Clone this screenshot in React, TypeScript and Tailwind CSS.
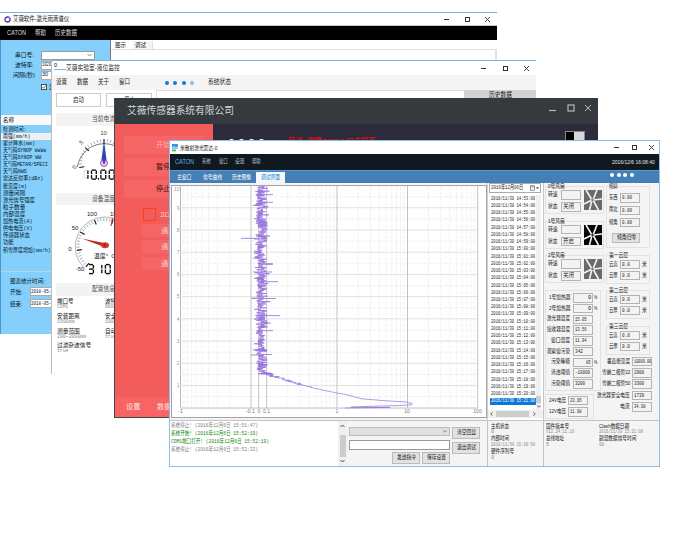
import { useLayoutEffect, useRef, useState } from "react";
import type { ReactNode } from "react";

const CJK = "font-['Liberation_Sans','Noto_Sans_CJK_SC',sans-serif]";
const MONO = "font-['Liberation_Mono','Noto_Sans_CJK_SC',monospace]";

/** One line of text, condensed or widened to fill the width of its box. */
function T({ c, children }: { c: string; children: ReactNode }) {
  const box = useRef<HTMLSpanElement>(null);
  const inner = useRef<HTMLSpanElement>(null);
  const [k, setK] = useState(1);
  useLayoutEffect(() => {
    const fit = () => {
      if (box.current && inner.current && inner.current.offsetWidth > 0) {
        setK(box.current.clientWidth / inner.current.offsetWidth);
      }
    };
    fit();
    document.fonts.ready.then(fit);
  }, []);
  return (
    <span ref={box} className={`flex shrink-0 items-center whitespace-nowrap leading-none ${c}`}>
      <span ref={inner} className="block shrink-0 origin-left" style={{ transform: `scaleX(${k})` }}>
        {children}
      </span>
    </span>
  );
}

function WinButtons({ c, gap }: { c: string; gap: string }) {
  return (
    <div className={`flex items-center ${gap} ${c}`}>
      <svg className="h-[7px] w-[7px]" viewBox="0 0 7 7"><path d="M1 3.5h5" stroke="currentColor" /></svg>
      <svg className="h-[7px] w-[7px]" viewBox="0 0 7 7"><rect x="1.5" y="1.5" width="4" height="4" fill="none" stroke="currentColor" /></svg>
      <svg className="h-[7px] w-[7px]" viewBox="0 0 7 7"><path d="M1 1l5 5M6 1l-5 5" stroke="currentColor" strokeWidth="0.9" /></svg>
    </div>
  );
}

/* ---------- Rain spectrometer window ---------- */
const rainRows: [string, string][] = [
  ["检测时间:", "w-[24px]"],
  ["雨强(mm/h)", "w-[27px]"],
  ["累计降水(mm)", "w-[32px]"],
  ["天气码SYNOP WaWa", "w-[43px]"],
  ["天气码SYNOP WW", "w-[38px]"],
  ["天气码METAR/SPECI", "w-[45px]"],
  ["天气码NWS", "w-[24px]"],
  ["雷达反射率(dBz)", "w-[40px]"],
  ["能见度(m)", "w-[24px]"],
  ["测量间隔", "w-[22px]"],
  ["激光信号强度", "w-[32px]"],
  ["粒子数量", "w-[22px]"],
  ["内部温度", "w-[22px]"],
  ["加热电流(A)", "w-[30px]"],
  ["供电电压(V)", "w-[30px]"],
  ["传感器状态", "w-[27px]"],
  ["功能", "w-[11px]"],
  ["积雪厚度增加(mm/h)", "w-[48px]"],
];

function RainWindow() {
  return (
    <div className="absolute left-0 top-[12px] flex h-[322px] w-[497px] flex-col overflow-hidden border-t border-[#78b4dc] bg-white">
      <div className="flex h-[13px] items-center border-b border-[#c8c8c8] pl-[4px] pr-[6px]">
        <svg className="mr-[2px] h-[7px] w-[7px]" viewBox="0 0 7 7">
          <circle cx="3.5" cy="3.5" r="2.5" fill="none" stroke="#4a2ba0" strokeWidth="1.3" />
          <path d="M3.5 1a2.5 2.5 0 0 1 2.5 2.5" fill="none" stroke="#9a6ae0" strokeWidth="1.3" />
        </svg>
        <T c="w-[56px] text-[6.500px] text-[#222]">艾薇软件-激光雨滴谱仪</T>
        <div className="grow" />
        <WinButtons c="text-[#333]" gap="gap-[13.5px]" />
      </div>
      <div className="flex h-[14px] items-center bg-black pl-[7px] text-[6.5px] text-[#ddd]">
        <T c="w-[19px] mr-[9px]">CATON</T>
        <T c="w-[11px] mr-[9px]">帮助</T>
        <T c="w-[22px]">历史数据</T>
      </div>
      <div className="flex grow">
        <div className="flex w-[110px] flex-col border-l border-[#4a98d0] bg-[#84cffc] text-[6px] text-[#0a1a28]">
          <div className="mt-[10px] flex h-[10px] items-center pl-[14px]">
            <T c="w-[19px]">串口号:</T>
            <div className="ml-[7px] flex h-[9px] w-[54px] items-center justify-end border border-[#999] bg-white pr-[2px]">
              <svg className="h-[4px] w-[5px]" viewBox="0 0 5 4"><path d="M.5 1l2 2 2-2" fill="none" stroke="#555" strokeWidth=".7" /></svg>
            </div>
          </div>
          <div className="flex h-[10px] items-center pl-[14px]">
            <T c="w-[19px]">波特率:</T>
            <div className="ml-[7px] flex h-[9px] w-[54px] items-center border border-[#aaa] bg-white"><T c="w-[9px] text-[5.5px]">1920</T></div>
          </div>
          <div className="flex h-[10px] items-center pl-[12px]">
            <T c="w-[22px]">间隔(秒)</T>
            <div className="ml-[6px] flex h-[9px] w-[54px] items-center border border-[#aaa] bg-white"><T c="w-[6px] text-[5.5px]">30</T></div>
          </div>
          <div className="mt-[3px] flex h-[8px] items-center pl-[40px]">
            <svg className="mr-[2px] h-[6px] w-[6px]" viewBox="0 0 6 6"><rect x=".4" y=".4" width="5.2" height="5.2" fill="#fff" stroke="#333" strokeWidth=".8" /><path d="M1.3 3l1.3 1.3L4.8 1.6" fill="none" stroke="#333" strokeWidth=".7" /></svg>
            <T c="w-[5px]">显</T>
          </div>
          <div className="mt-[24px] flex h-[10px] items-center bg-[#fafafa] pl-[2px]"><T c="w-[11px]">名称</T></div>
          <div className={`flex flex-col pt-[1px] text-[5.800px] ${MONO}`}>
            {rainRows.map(([text, w], i) => (
              <div key={text} className={`flex h-[7.12px] items-center pl-[2px] ${i === 1 ? "bg-[#f0f0f0]" : ""}`}>
                <T c={w}>{text}</T>
              </div>
            ))}
          </div>
          <div className="mt-[17px] h-px bg-[#b8d4e4]" />
          <div className="mt-[5px] flex h-[8px] items-center pl-[9px]"><T c="w-[35px]">图表统计时间:</T></div>
          <div className="mt-[2px] flex h-[10px] items-center pl-[9px]">
            <T c="w-[13px]">开始:</T>
            <div className={`ml-[7px] flex h-[9px] w-[54px] items-center border border-[#aaa] bg-white ${MONO}`}><T c="w-[20px] text-[5.5px]">2018-05-</T></div>
          </div>
          <div className="mt-[2px] flex h-[10px] items-center pl-[9px]">
            <T c="w-[13px]">结束:</T>
            <div className={`ml-[7px] flex h-[9px] w-[54px] items-center border border-[#aaa] bg-white ${MONO}`}><T c="w-[20px] text-[5.5px]">2018-05-</T></div>
          </div>
        </div>
        <div className="flex grow flex-col border-l border-[#777] bg-white">
          <div className="flex h-[9px] items-center text-[6px] text-[#222]">
            <div className="flex w-[18px] justify-center"><T c="w-[11px]">图示</T></div>
            <div className="ml-[4px] flex h-[8px] w-[20px] items-center self-end border-r border-[#ddd] bg-[#f4f4f4] pl-[2px]"><T c="w-[11px]">调试</T></div>
          </div>
          <div className="grow border-r-2 border-t border-[#e0e0e0]" />
        </div>
      </div>
    </div>
  );
}

/* ---------- Level monitor window ---------- */
function polar(cx: number, cy: number, r: number, deg: number) {
  const a = (deg * Math.PI) / 180;
  return [cx + r * Math.cos(a), cy - r * Math.sin(a)];
}

function Ticks({ cx, cy, r, from, to, n, major }: { cx: number; cy: number; r: number; from: number; to: number; n: number; major: number }) {
  return (
    <g>
      {Array.from({ length: n + 1 }, (_, i) => {
        const d = from + ((to - from) * i) / n;
        const big = i % major === 0;
        const [x1, y1] = polar(cx, cy, r, d);
        const [x2, y2] = polar(cx, cy, r - (big ? 5 : 3), d);
        return <line key={i} x1={x1} y1={y1} x2={x2} y2={y2} stroke={big ? "#111" : "#8898b0"} strokeWidth={big ? 1.1 : 0.8} />;
      })}
    </g>
  );
}

const segments: Record<string, string> = {
  "0": "abcdef",
  "1": "bc",
  "3": "abcdg",
};
const segPath: Record<string, string> = {
  a: "M1 .6h4", b: "M5.4 1v3.6", c: "M5.4 5.6v3.6", d: "M1 9.6h4", e: "M.6 5.6v3.6", f: "M.6 1v3.6", g: "M1 5.1h4",
};
function Lcd({ digits, x, y, dot }: { digits: string; x: number; y: number; dot?: number }) {
  return (
    <g>
      {digits.split("").map((d, i) => (
        <g key={i} transform={`translate(${x + i * 8.4 + (dot !== undefined && i > dot ? 1 : 0)} ${y})`} fill="none" strokeWidth="1.4">
          {(segments[d] ?? "").split("").map((s) => <path key={s} d={segPath[s]} stroke="#111" />)}
        </g>
      ))}
      {dot !== undefined && <circle cx={x + (dot + 1) * 8.4 - 0.8} cy={y + 9.4} r=".8" />}
    </g>
  );
}

function CurrentGauge() {
  return (
    <svg className="h-[67px] w-[95px] font-['Liberation_Sans',sans-serif]" viewBox="56 125 95 67">
      <path d="M77.5 166A27 27 0 0 1 131 166" fill="none" stroke="#555" strokeWidth=".8" />
      <Ticks cx={104} cy={163} r={25} from={188} to={-8} n={24} major={6} />
      <g fontSize="6" fill="#444" textAnchor="middle">
        <text x="74.5" y="168" transform="rotate(-70 74.5 166)">0</text>
        <text x="81" y="143.500" transform="rotate(-40 81 141)">5</text>
        <text x="103.500" y="133.500">10</text>
      </g>
      <path d="M104 139l-2.600 20h5.200z" fill="#2458a8" />
      <path d="M104 150l-1.600 11h3.200z" fill="#5520c8" />
      <circle cx="104" cy="162" r="3.400" fill="none" stroke="#6048b8" strokeWidth="1" />
      <circle cx="104" cy="162" r="1.500" fill="#9a40d8" />
      <path d="M84 169v8M84 169h4M84 177h4" stroke="#000" fill="none" opacity=".12" />
      <Lcd digits="1000" x={82.5} y={168.500} dot={1} />
    </svg>
  );
}

function TempGauge() {
  return (
    <svg className="h-[78px] w-[95px] font-['Liberation_Sans','Noto_Sans_CJK_SC',sans-serif]" viewBox="56 205 95 78">
      <path d="M83.500 267A29.500 29.500 0 0 1 104.500 217A29.500 29.500 0 0 1 126 226" fill="none" stroke="#999" strokeWidth=".7" />
      <Ticks cx={104.500} cy={246} r={28} from={228} to={20} n={32} major={6} />
      <path d="M112.500 218l-1.500 8" stroke="#c33" strokeWidth="1.200" />
      <g fontSize="6" fill="#222" textAnchor="middle">
        <text x="92" y="215.500">100</text>
        <text x="115" y="215.500">150</text>
        <text x="75" y="229.500">50</text>
        <text x="70" y="251">0</text>
        <text x="80" y="271">-50</text>
        <text x="101" y="258">温度°</text>
        <text x="113.500" y="258">C</text>
      </g>
      <path d="M82 238.500l22 4.500v4z" fill="#c8281e" />
      <ellipse cx="105" cy="245.300" rx="4" ry="3" fill="#d23a2a" />
      <circle cx="104.500" cy="245" r="1" fill="#7a1510" />
      <Lcd digits="310" x={88} y={264} />
    </svg>
  );
}

function SectionHead({ text }: { text: string }) {
  return (
    <div className="flex h-[12.5px] items-center bg-[#f3f3f3] pl-[36px] text-[6.5px] text-[#555]"><T c="w-[23px]">{text}</T></div>
  );
}

const config: string[][] = [
  ["端口号", "COM1", "波特率", "9600", "w-[17px]", "w-[11px]", "w-[17px]"],
  ["安装距离", "1500mm", "安全距离", "1000", "w-[23px]", "w-[18px]", "w-[23px]"],
  ["测量范围", "200~2000mm", "自动", "true", "w-[23px]", "w-[29px]", "w-[11px]"],
  ["过滤杂波信号", "true", "", "", "w-[34px]", "w-[11px]", "w-[11px]"],
];

function LevelWindow() {
  return (
    <div className="absolute left-[51px] top-[60px] flex h-[314px] w-[485px] flex-col overflow-hidden border-l border-t border-l-[#bcbcbc] border-t-[#78b4dc] bg-white">
      <div className="flex h-[14px] items-center pr-[6px]">
        <div className="h-full w-[14px] pl-[2px] text-[5.5px]">
          <span className="flex h-[9px] w-full items-center border-b border-[#78b4dc]">0</span>
        </div>
        <T c="w-[54px] text-[6.500px] text-[#222]">艾薇实验室-液位监控</T>
        <div className="grow" />
        <WinButtons c="text-[#333]" gap="gap-[14.500px]" />
      </div>
      <div className="flex h-[15px] items-center bg-[#f4f4f4] pl-[4px] text-[6.5px] text-[#222]">
        <T c="w-[11px] mr-[10px]">设置</T>
        <T c="w-[11px] mr-[10px]">数据</T>
        <T c="w-[11px] mr-[10px]">关于</T>
        <T c="w-[11px]">窗口</T>
        <div className="ml-[35px] mr-[14px] flex gap-[4.300px]">
          <i className="size-[4px] rounded-full bg-[#1478d4]" />
          <i className="size-[4px] rounded-full bg-[#1478d4]" />
          <i className="size-[4px] rounded-full bg-[#1478d4]" />
          <i className="size-[4px] rounded-full bg-[#7cc0f4]" />
        </div>
        <T c="w-[23px]">系统状态</T>
      </div>
      <div className="flex grow">
        <div className="flex w-[104px] shrink-0 flex-col overflow-hidden pl-[4px]">
          <div className="mt-[3px] flex gap-[5px] text-[6.5px] text-[#333]">
            <div className="flex h-[14px] w-[45px] items-center justify-center border border-[#ccc]"><T c="w-[11px]">启动</T></div>
            <div className="flex h-[14px] w-[46px] items-center justify-center border border-[#ccc]"><T c="w-[11px]">停止</T></div>
          </div>
          <div className="mt-[6px]"><SectionHead text="当前电流" /></div>
          <CurrentGauge />
          <SectionHead text="设备温度" />
          <TempGauge />
          <SectionHead text="配置信息" />
          <div className="mt-[2px] flex flex-col text-[6.2px] text-[#222]">
            {config.map((r) => (
              <div key={r[0]} className="flex h-[14.600px]">
                <div className="w-[49px] shrink-0 pl-px">
                  <T c={`h-[8px] ${r[4]}`}>{r[0]}</T>
                  <T c={`h-[5px] text-[5.2px] text-[#888] ${MONO} ${r[5]}`}>{r[1]}</T>
                </div>
                {r[2] && (
                  <div className="w-[49px] shrink-0">
                    <T c={`h-[8px] ${r[6]}`}>{r[2]}</T>
                    <T c={`h-[5px] w-[11px] text-[5.2px] text-[#888] ${MONO}`}>{r[3]}</T>
                  </div>
                )}
              </div>
            ))}
          </div>
        </div>
        <div className="h-[14px] grow border-l border-t border-[#ddd]" />
        <div className="flex h-[14px] w-[72px] justify-center bg-[#d2d2d2] pt-[2px] text-[6.5px] text-[#222]"><T c="h-[7px] w-[23px]">历史数据</T></div>
      </div>
    </div>
  );
}

/* ---------- Sensor system window ---------- */
function SensorWindow() {
  return (
    <div className="absolute left-[114px] top-[98px] flex h-[320px] w-[484px] flex-col overflow-hidden border-b border-l border-[#474548] bg-[#2b2b3c]">
      <div className="flex h-[26px] shrink-0 items-center bg-[#343a3d] pl-[12px] pr-[6px]">
        <T c="w-[107px] text-[10px] text-[#d4d8d8]">艾薇传感器系统有限公司</T>
        <div className="grow" />
        <div className="mb-[6px] flex items-center gap-[9.5px] text-[#b4b8b8]">
          <svg className="h-[8px] w-[8px]" viewBox="0 0 8 8"><path d="M0 6.500h7" stroke="currentColor" strokeWidth="1.200" /></svg>
          <svg className="h-[8px] w-[8px]" viewBox="0 0 8 8"><rect x="1" y="1" width="6" height="6" fill="none" stroke="currentColor" strokeWidth="1.200" /></svg>
          <svg className="h-[8px] w-[8px]" viewBox="0 0 8 8"><path d="M1 1l6 6M7 1l-6 6" stroke="currentColor" /></svg>
        </div>
      </div>
      <div className="flex grow">
        <div className="flex w-[98px] flex-col bg-[#f25c5a] text-[7.200px]">
          <div className="ml-[9px] mt-[12px] flex w-[80px] flex-col gap-[4px]">
            <div className="flex h-[18px] items-center bg-[#f66565] pl-[32px] text-[#ffb4b0]"><T c="w-[14px]">开始</T></div>
            <div className="flex h-[18px] items-center bg-[#f66565] pl-[32px] text-[#40100f]"><T c="w-[14px]">暂停</T></div>
            <div className="flex h-[18px] items-center bg-[#f66565] pl-[32px] text-[#40100f]"><T c="w-[14px]">停止</T></div>
          </div>
          <div className="ml-[28px] mt-[10px] flex items-center">
            <i className="size-[13px] border border-[#ff4020]" />
            <T c="ml-[4px] w-[10px] text-[#ffc8c4]">3D</T>
          </div>
          <div className="ml-[27px] mt-[3px] flex w-[64px] flex-col gap-[3px] text-[#ffc4c0]">
            <div className="flex h-[13px] items-center bg-[#f66565] pl-[19px]"><T c="w-[14px]">通道</T></div>
            <div className="flex h-[14px] items-center bg-[#f66565] pl-[19px]"><T c="w-[14px]">通道</T></div>
            <div className="flex h-[13px] items-center bg-[#f66565] pl-[19px]"><T c="w-[14px]">通道</T></div>
          </div>
          <div className="mt-auto flex h-[20px] items-center bg-[#f86464] pl-[11px] text-[#ffe0dc]">
            <T c="mr-[17px] w-[14px]">设置</T>
            <T c="w-[14px]">数据</T>
          </div>
        </div>
        <div className="flex grow items-start pl-[16px] pr-[13px]">
          <div className="mt-[14.500px] flex gap-[5.500px]">
            <i className="size-[4.500px] rounded-full bg-white" />
            <i className="size-[4.500px] rounded-full bg-white" />
            <i className="size-[4.500px] rounded-full bg-white" />
            <i className="size-[4.500px] rounded-full bg-white" />
          </div>
          <T c="ml-[24px] mt-[14px] w-[87px] text-[8px] font-bold text-[#d01414]">错误: 测得COM 1 口未打开</T>
          <div className="grow" />
          <div className="mt-[7px] flex h-[10px] border border-[#888]">
            <i className="w-[8px] bg-black" />
            <i className="w-[10px] bg-[#d8d8d8]" />
          </div>
        </div>
      </div>
    </div>
  );
}

/* ---------- Lidar window ---------- */
const yOf = (v: number) => 407.7 - v * 22.22;

function buildTrace() {
  let seed = 17;
  const rnd = () => {
    seed = (seed * 16807) % 2147483647;
    return seed / 2147483647;
  };
  const pts: string[] = [];
  for (let y = 186; y < 373; y += 0.27) {
    const g = rnd() + rnd() + rnd() - 1.5;
    let x = 261 + Math.sin(y / 7) * 0.8 + g * 6;
    if (rnd() > 0.97) x += (rnd() - 0.4) * 14;
    pts.push(`${x.toFixed(1)} ${y.toFixed(1)}`);
  }
  const tail = [[262, 373], [268, 375], [278, 377.5], [290, 381.5], [300, 384.5], [313, 388], [325, 390.5], [337, 393]];
  for (let i = 0; i < tail.length - 1; i++) {
    for (let s = 0; s < 10; s++) {
      const f = s / 10;
      const wobble = (rnd() - 0.4) * Math.max(1, 16 - i * 3);
      pts.push(`${(tail[i][0] + (tail[i + 1][0] - tail[i][0]) * f + wobble).toFixed(1)} ${(tail[i][1] + (tail[i + 1][1] - tail[i][1]) * f).toFixed(1)}`);
    }
  }
  return "M" + pts.join("L") + "L337 393L346 394.5L355 397L362 398.8L382 400.5L406 402L412 403.5L412 404.7L400 405.5L370 406.3L351 407.2L390 407.4L345 408";
}
const trace = buildTrace();
const spikes = [[241, 257, 238.3], [260, 273, 194.6], [260, 273, 202.3], [260, 273, 264], [260, 278, 281.7], [260, 276, 298.5], [260, 280, 315.6], [260, 271, 323], [260, 273, 330.7], [251, 260, 355], [253, 272, 272], [260, 272, 354.5]];

function ProfileChart() {
  const log = [2, 3, 4, 5, 6, 7, 8, 9].map((k) => Math.log10(k) * 70.3);
  return (
    <svg className="block h-[231px] w-[314px] font-['Liberation_Sans',sans-serif]" viewBox="172 186 314 231">
      <path d="M180.500 186V408H478" fill="none" stroke="#b8b8b8" />
      <g stroke="#e9e9e9" strokeWidth=".7" strokeDasharray="4 1.500">
        {log.map((d) => <path key={d} d={`M${251 - d} 186V408M${266.7 + d} 186V408M${337 + d} 186V408M${407.3 + d} 186V408`} />)}
        {Array.from({ length: 10 }, (_, i) => <path key={i} d={`M180 ${yOf(i + 0.5)}H478`} />)}
      </g>
      <g stroke="#e2e2e2">
        {Array.from({ length: 10 }, (_, i) => <path key={i} d={`M180 ${yOf(i)}H478`} />)}
      </g>
      <g stroke="#c2c2c2">
        {[251, 258.7, 266.7, 337, 407.5, 477.7].map((x) => <path key={x} d={`M${x} 186V408`} />)}
      </g>
      <g fontSize="5" fill="#999" textAnchor="end">
        {Array.from({ length: 10 }, (_, i) => <text key={i} x="179.500" y={i === 9 ? 190.5 : yOf(i + 1) + 1.8}>{i + 1}</text>)}
      </g>
      <g fontSize="5" fill="#777" textAnchor="middle">
        <text x="180.500" y="413">-1</text>
        <text x="250.500" y="413">-0.1</text>
        <text x="259" y="413">0</text>
        <text x="266.500" y="413">0.1</text>
        <text x="337" y="413">1</text>
        <text x="407" y="413">10</text>
        <text x="477.500" y="413">100</text>
      </g>
      <path d={trace} fill="none" stroke="#9370db" strokeWidth=".7" strokeLinejoin="round" />
      <g stroke="#9c7ce0" strokeWidth=".9">
        {spikes.map(([a, b, y]) => <path key={y} d={`M${a} ${y}H${b}`} />)}
      </g>
    </svg>
  );
}

function stamp(i: number) {
  const m = 53 + i;
  const h = m >= 60 ? 15 : 14;
  return `2016/11/30 ${h}:${String(m % 60).padStart(2, "0")}:00`;
}

function DateColumn() {
  return (
    <div className={`flex w-[56px] shrink-0 flex-col border-r border-[#c4c4c4] bg-white text-[5.800px] text-[#1a1a1a] ${MONO}`}>
      <div className="ml-px flex h-[10px] w-[52px] items-center border border-[#aaa] px-px">
        <T c="w-[32px]">2016年12月06日</T>
        <svg className="ml-auto h-[6px] w-[9px]" viewBox="0 0 9 6"><rect x=".5" y=".8" width="4" height="4.400" fill="none" stroke="#666" strokeWidth=".7" /><path d="M.5 2h4" stroke="#666" strokeWidth=".6" /><path d="M6 2.300h3l-1.500 1.800z" fill="#246" /></svg>
      </div>
      <div className="mt-[2px] flex">
        <div className="w-[48px] pl-[2px]">
          {Array.from({ length: 29 }, (_, i) => (
            <div key={i} className={`flex h-[7.240px] items-center pl-px ${i === 28 ? "bg-[#0a78d6] text-white" : ""}`}>
              <T c="w-[43.500px]">{stamp(i)}</T>
            </div>
          ))}
        </div>
        <div className="flex h-[215px] w-[5px] flex-col items-center justify-end bg-[#f0f0f0]">
          <i className="h-[7px] w-[5px] bg-[#cdcdcd]" />
          <svg className="my-[2px] h-[3px] w-[4px]" viewBox="0 0 4 3"><path d="M.3.500l1.700 1.700L3.700.500" fill="none" stroke="#333" strokeWidth=".8" /></svg>
        </div>
      </div>
      <div className="flex h-[8px] items-center justify-between bg-[#f0f0f0] px-[2px]">
        <svg className="h-[4px] w-[3px]" viewBox="0 0 3 4"><path d="M2.500.300L.8 2l1.700 1.700" fill="none" stroke="#333" strokeWidth=".8" /></svg>
        <i className="mr-[2px] h-[6px] w-[33px] bg-[#cdcdcd]" />
        <svg className="mr-[5px] h-[4px] w-[3px]" viewBox="0 0 3 4"><path d="M.5.300L2.200 2 .5 3.700" fill="none" stroke="#333" strokeWidth=".8" /></svg>
      </div>
    </div>
  );
}

function Field({ v, w = "w-[8px]", right }: { v: string; w?: string; right?: boolean }) {
  return (
    <div className={`flex h-[9.500px] w-[20px] shrink-0 items-center border border-[#b4b4b4] bg-[#f3f3f3] ${MONO} ${right ? "justify-end pr-px" : "pl-px"}`}>
      {v && <T c={`text-[5.500px] ${w}`}>{v}</T>}
    </div>
  );
}

function FanIcon({ on }: { on?: boolean }) {
  return (
    <svg className="h-[20px] w-[18px]" viewBox="0 0 18 20">
      <rect width="18" height="20" fill={on ? "#050505" : "#6a6a6a"} />
      <g stroke="#f4f4f4" strokeWidth="1.600">
        <path d="M8 10L2 0M9 10L13 0M9 10L18 9M9 10L14.500 20M8 10L0 14M8 10L5.500 20" />
      </g>
      <circle cx="8.500" cy="10" r="1.400" fill={on ? "#222" : "#777"} stroke="#ccc" strokeWidth=".4" />
    </svg>
  );
}

function FanGroup({ n, state, on }: { n: number; state: string; on?: boolean }) {
  return (
    <div className="h-[34.500px]">
      <div className="flex h-[28px] w-[59px] gap-[3px] border border-[#e2e2e2] pl-[2px]">
        <div className="flex flex-col">
          <T c="-mt-[3px] h-[6px] w-[17px]">{n}号风扇</T>
          <div className="flex h-[10px] items-center gap-[3px]"><T c="w-[10px]">转速</T><Field v="" /></div>
          <div className="mt-[2px] flex h-[10px] items-center gap-[3px]"><T c="w-[10px]">状态</T><Field v={state} w="w-[11px]" /></div>
        </div>
        <div className="pt-[3px]"><FanIcon on={on} /></div>
      </div>
    </div>
  );
}

const heater: [string, string, string, string, boolean][] = [
  ["1号加热器", "w-[21px]", "0", "w-[3px]", true],
  ["2号加热器", "w-[21px]", "0", "w-[3px]", true],
  ["激光器温度", "w-[23px]", "15.05", "w-[12px]", false],
  ["接收器温度", "w-[23px]", "13.56", "w-[12px]", false],
  ["窗口温度", "w-[19px]", "11.94", "w-[12px]", false],
  ["观察窗污染", "w-[23px]", "342", "w-[8px]", false],
  ["污染等级", "w-[19px]", "85", "w-[5px]", true],
  ["清洁阈值", "w-[19px]", "-10000", "w-[15px]", false],
  ["污染阈值", "w-[19px]", "3200", "w-[10px]", false],
];

const optics: [string, string, string, string][] = [
  ["垂直能见度", "w-[23px]", "10000.00", "w-[17px]"],
  ["雪崩二极管22", "w-[28px]", "2900", "w-[10px]"],
  ["雪崩二极管50", "w-[28px]", "3300", "w-[10px]"],
  ["激光器安全电压", "w-[33px]", "1739", "w-[10px]"],
  ["电流", "w-[10px]", "34.98", "w-[12px]"],
];

function CloudGroup({ name, gap }: { name: string; gap: string }) {
  return (
    <div className={gap}>
      <div className="h-[29px] w-[44px] border border-[#e2e2e2] pl-[2px]">
        <T c="-mt-[3px] h-[6px] w-[19px]">{name}</T>
        <div className="flex h-[11px] items-center gap-[2px]"><T c="w-[9px]">云高</T><Field v="0.0" /><T c="w-[5px]">米</T></div>
        <div className="flex h-[11px] items-center gap-[2px]"><T c="w-[9px]">云厚</T><Field v="0.0" /><T c="w-[5px]">米</T></div>
      </div>
    </div>
  );
}

function StatusPanel() {
  return (
    <div className="flex grow pl-px pt-[3px] text-[5.800px] text-[#222]">
      <div className="w-[61px] shrink-0">
        <FanGroup n={0} state="关闭" />
        <FanGroup n={1} state="开启" on />
        <FanGroup n={2} state="关闭" />
        <div className="h-[101px] w-[56px] border border-[#e2e2e2] pt-[2px]">
          {heater.map(([name, w, v, vw, pct]) => (
            <div key={name} className="flex h-[10.750px] items-center">
              <div className="flex w-[24px] justify-end"><T c={w}>{name}</T></div>
              <div className="ml-[3px] flex items-center gap-px">
                <Field v={v} w={vw} right={pct} />
                {pct && <T c="w-[3px] text-[5px]">%</T>}
              </div>
            </div>
          ))}
        </div>
        <div className="mt-[3px] h-[25px] w-[49px] border border-[#e2e2e2] pl-[3px]">
          <div className="flex h-[12px] items-center gap-[2px]"><T c="w-[17px]">24V电压</T><Field v="23.95" w="w-[12px]" /></div>
          <div className="flex h-[11px] items-center gap-[2px]"><T c="w-[17px]">12V电压</T><Field v="11.98" w="w-[12px]" /></div>
        </div>
      </div>
      <div className="w-[46px] shrink-0">
        <div className="h-[69px]">
          <div className="h-[62px] w-[44px] border border-[#e2e2e2] pl-[2px]">
            <T c="-mt-[3px] h-[6px] w-[9px]">倾斜</T>
            <div className="mt-[2px] flex h-[12.200px] items-center gap-[2px]"><T c="w-[9px]">东西</T><Field v="0.00" w="w-[10px]" /></div>
            <div className="flex h-[12.200px] items-center gap-[2px]"><T c="w-[9px]">南北</T><Field v="0.00" w="w-[10px]" /></div>
            <div className="flex h-[12.200px] items-center gap-[2px]"><T c="w-[9px]">倾角</T><Field v="0.00" w="w-[10px]" /></div>
            <div className="ml-[3px] mt-[4px] flex h-[10px] w-[28px] items-center justify-center border border-[#bbb] bg-[#e2e2e2]"><T c="w-[19px]">倾角归零</T></div>
          </div>
        </div>
        <CloudGroup name="第一云层" gap="h-[35px]" />
        <CloudGroup name="第二云层" gap="h-[36px]" />
        <CloudGroup name="第三云层" gap="h-[30px]" />
        <div className="-ml-[11px] flex w-[57px] flex-col">
          {optics.map(([name, w, v, vw]) => (
            <div key={name} className="flex h-[11.300px] items-center justify-end gap-[2px]">
              <T c={w}>{name}</T>
              <Field v={v} w={vw} />
            </div>
          ))}
        </div>
      </div>
    </div>
  );
}

function Btn({ text, c }: { text: string; c: string }) {
  return (
    <div className={`flex w-[28px] items-center justify-center border border-[#bababa] bg-[#e2e2e2] ${c}`}><T c="w-[19px]">{text}</T></div>
  );
}

function Info({ label, lw, value, vw }: { label: string; lw: string; value: string; vw: string }) {
  return (
    <div className="h-[12.800px]">
      <T c={`h-[7px] text-[5.800px] text-[#222] ${lw}`}>{label}</T>
      <T c={`h-[5px] text-[5.200px] text-[#888] ${MONO} ${vw}`}>{value}</T>
    </div>
  );
}

const logs: [string, string, string][] = [
  ["系统停止! (2016年12月6日 15:51:47)", "text-[#808080]", "w-[87px]"],
  ["系统开始! (2016年12月6日 15:52:19)", "text-[#108810]", "w-[87px]"],
  ["COM1端口打开! (2016年12月6日 15:52:19)", "text-[#108810]", "w-[98px]"],
  ["系统停止! (2016年12月6日 15:52:33)", "text-[#808080]", "w-[87px]"],
];

function LidarWindow() {
  return (
    <div className="absolute left-[169px] top-[140px] flex h-[327px] w-[491px] flex-col overflow-hidden border border-[#8cbfe8] bg-[#f4f4f4]">
      <div className="flex h-[13px] shrink-0 items-center bg-white pl-[2px] pr-[4px]">
        <svg className="mr-[2px] h-[8px] w-[6px]" viewBox="0 0 6 8"><rect width="6" height="4.500" fill="#2a9ae0" /><path d="M0 3l2-1 2 1 2-1v2H0z" fill="#8cd0f8" /><rect y="5.500" width="4" height="1.800" fill="#52b848" /></svg>
        <T c="w-[37px] text-[6px] text-[#222]">米散射激光雷达-0</T>
        <div className="grow" />
        <WinButtons c="text-[#333]" gap="gap-[10.500px]" />
      </div>
      <div className="flex h-[16px] shrink-0 items-center bg-[#101820] pl-[5px] pr-[4px] text-[5.800px] text-[#b8c0c8]">
        <T c="w-[19px] text-[6.500px] text-[#5ab0e8]">CATON</T>
        <T c="ml-[8px] w-[9px]">系统</T>
        <T c="ml-[8px] w-[9px]">窗口</T>
        <T c="ml-[7px] w-[10px]">设置</T>
        <T c="ml-[7px] w-[9px]">帮助</T>
        <div className="grow" />
        <T c="w-[43px] text-[6px] text-[#e4e4e4]">2016/12/6 16:08:40</T>
      </div>
      <div className="flex h-[13px] shrink-0 items-end border-t border-[#5c9ad0] bg-[#4480b6] pl-[7px] text-[5.800px] text-white">
        <T c="h-[11px] w-[14px]">主窗口</T>
        <T c="ml-[12px] h-[11px] w-[19px]">信号曲线</T>
        <T c="ml-[10px] h-[11px] w-[19px]">历史图像</T>
        <div className="ml-[5px] flex h-[11px] w-[29px] items-center justify-center bg-[#f4f8fc] text-[#1484d8]"><T c="w-[19px]">调试界面</T></div>
        <div className="grow" />
        <div className="mb-[6px] mr-[25px] flex gap-[2.600px]">
          <i className="size-[4px] rounded-full bg-white" />
          <i className="size-[4px] rounded-full bg-white" />
          <i className="size-[4px] rounded-full bg-white" />
          <i className="size-[4px] rounded-full bg-white" />
        </div>
      </div>
      <div className="flex h-[237px] shrink-0">
        <div className="w-[318px] shrink-0 border-r border-[#d0d0d0] pl-px pt-[2px]">
          <div className="h-[233px] w-[316px] overflow-hidden border border-[#a4a4a4] bg-white"><ProfileChart /></div>
        </div>
        <DateColumn />
        <StatusPanel />
      </div>
      <div className="flex grow border-t border-[#c4c4c4]">
        <div className={`flex w-[168px] flex-col bg-white pl-px pt-[1.500px] text-[5.800px] ${MONO}`}>
          {logs.map(([text, color, w]) => <T key={text} c={`h-[7.700px] ${w} ${color}`}>{text}</T>)}
        </div>
        <div className="flex w-[9px] flex-col items-center bg-[#f0f0f0] pt-[3px]">
          <svg className="h-[4px] w-[5px]" viewBox="0 0 5 4"><path d="M.5 3l2-2 2 2" fill="none" stroke="#333" strokeWidth=".9" /></svg>
          <i className="mt-[7px] h-[22px] w-[6px] bg-[#cdcdcd]" />
          <svg className="mt-[2px] h-[4px] w-[5px]" viewBox="0 0 5 4"><path d="M.5 1l2 2 2-2" fill="none" stroke="#333" strokeWidth=".9" /></svg>
        </div>
        <div className="flex w-[141px] border-r border-[#c4c4c4] pl-[2px] text-[5.800px] text-[#222]">
          <div className="mt-[6px] flex w-[101px] flex-col">
            <div className="flex h-[9px] items-center justify-end border border-[#bbb] bg-[#e0e0e0] pr-[2px]">
              <svg className="h-[3px] w-[4px]" viewBox="0 0 4 3"><path d="M.3.500L2 2.200 3.700.500" fill="none" stroke="#555" strokeWidth=".7" /></svg>
            </div>
            <div className="mt-[4px] h-[10px] border border-[#999] bg-white" />
            <div className="mt-[2px] flex justify-end gap-[2px]"><Btn text="发送指令" c="h-[12px]" /><Btn text="保存设置" c="h-[12px]" /></div>
          </div>
          <div className="ml-[2px] mt-[6px] flex flex-col gap-[3px]"><Btn text="清空回显" c="h-[12px]" /><Btn text="退出调试" c="h-[12px]" /></div>
        </div>
        <div className="w-[56px] border-r border-[#c4c4c4] pl-[3px] pt-[2px]">
          <Info label="主机状态" lw="w-[18px]" value="0" vw="w-[3px]" />
          <Info label="内部时间" lw="w-[18px]" value="2016/11/30 15:20:58" vw="w-[44px]" />
          <Info label="硬件序列号" lw="w-[23px]" value="0" vw="w-[3px]" />
        </div>
        <div className="w-[55px] pl-[2px] pt-[2px]">
          <Info label="固件版本号" lw="w-[23px]" value="V12.24.11.16" vw="w-[28px]" />
          <Info label="总线地址" lw="w-[18px]" value="5" vw="w-[3px]" />
        </div>
        <div className="pt-[2px]">
          <Info label="Clash数据日期" lw="w-[30px]" value="2016/11/30 15:21:00" vw="w-[44px]" />
          <Info label="副温数据信号时间" lw="w-[37px]" value="60" vw="w-[5px]" />
        </div>
      </div>
    </div>
  );
}

export default function App() {
  return (
    <div className={`relative h-[534px] w-[675px] overflow-hidden bg-white ${CJK}`}>
      <RainWindow />
      <LevelWindow />
      <SensorWindow />
      <LidarWindow />
    </div>
  );
}
